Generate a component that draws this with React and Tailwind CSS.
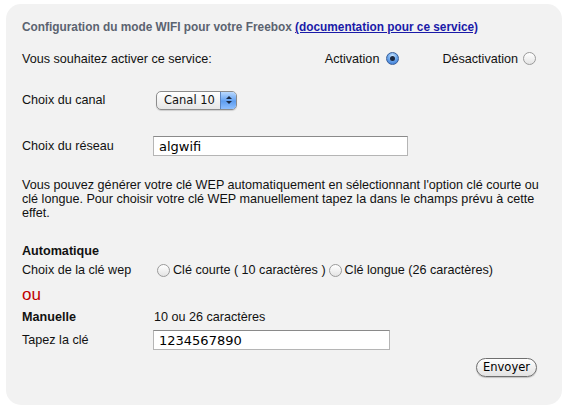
import React from 'react';

const Radio = ({ checked }) => (
    <span
        className={`inline-flex items-center justify-center w-[13px] h-[13px] rounded-full border shrink-0 ${
            checked
                ? 'border-[#3a5f99] bg-[radial-gradient(circle_at_50%_30%,#d6ecff_0%,#6fa9ec_45%,#2f6fd0_100%)]'
                : 'border-[#9a9a9a] bg-[linear-gradient(#ffffff,#e4e4e4)]'
        }`}
    >
        {checked && <span className="w-[5px] h-[5px] rounded-full bg-[#1a2740]"></span>}
    </span>
);

const Label = ({ children, bold }) => (
    <div className={`w-[133px] shrink-0 ${bold ? 'font-bold' : ''}`}>{children}</div>
);

const App = () => {
    return (
        <div className="w-[568px] h-[411px] bg-white pt-[4px] pl-[6px] text-[12.6px] text-[#111] font-['Liberation_Sans',Arial,sans-serif]">
            <div className="w-[556px] h-[401px] rounded-[15px] bg-[#f2f2f2] pt-[16px] pl-[16px] pr-[12px]">
                {/* Title */}
                <div className="h-[15px] leading-[15px] text-[11.85px] font-bold text-[#5b6370]">
                    Configuration du mode WIFI pour votre Freebox{' '}
                    <a href="#" className="text-[#1a1aa8] underline">(documentation pour ce service)</a>
                </div>

                {/* Activation */}
                <div className="mt-[14px] h-[20px] flex items-center">
                    <span className="flex-1">Vous souhaitez activer ce service:</span>
                    <span className="flex items-center gap-[7px] mr-[43px]">Activation <Radio checked /></span>
                    <span className="flex items-center gap-[5px] mr-[14px]">Désactivation <Radio /></span>
                </div>

                {/* Canal */}
                <div className="mt-[21px] h-[20px] flex items-center">
                    <Label>Choix du canal</Label>
                    <div className="ml-[1px] flex h-[19px] w-[81px] rounded-[5px] border border-[#8c8c8c] overflow-hidden bg-[linear-gradient(#ffffff,#e6e6e6)] shadow-[0_1px_1px_rgba(0,0,0,0.15)]">
                        <span className="flex-1 pl-[7px] leading-[17px] font-['DejaVu_Sans',sans-serif] text-[11.5px]">Canal 10</span>
                        <span className="w-[16px] border-l border-[#5d85c0] bg-[linear-gradient(#b9d9ff,#5f9ef0_55%,#8fc0ff)] flex flex-col items-center justify-center gap-[2px]">
                            <span className="w-0 h-0 border-l-[3px] border-r-[3px] border-b-[3px] border-l-transparent border-r-transparent border-b-[#1a2a44]"></span>
                            <span className="w-0 h-0 border-l-[3px] border-r-[3px] border-t-[3px] border-l-transparent border-r-transparent border-t-[#1a2a44]"></span>
                        </span>
                    </div>
                </div>

                {/* Réseau */}
                <div className="mt-[26px] h-[20px] flex items-center">
                    <Label>Choix du réseau</Label>
                    <input
                        readOnly
                        value="algwifi"
                        className="-ml-[2px] w-[255px] h-[20px] bg-white border border-[#b5b5b5] border-t-[#8a8a8a] px-[5px] text-[13px] font-['DejaVu_Sans',sans-serif] text-black outline-none"
                    />
                </div>

                {/* Paragraph */}
                <p className="mt-[22px] w-[528px] leading-[14px]">
                    Vous pouvez générer votre clé WEP automatiquement en sélectionnant l'option clé courte ou clé longue. Pour choisir votre clé WEP manuellement tapez la dans le champs prévu à cette effet.
                </p>

                {/* Automatique */}
                <div className="mt-[24px] h-[15px] leading-[15px] font-bold">Automatique</div>
                <div className="mt-[3px] h-[16px] flex items-center">
                    <Label>Choix de la clé wep</Label>
                    <span className="ml-[2px] flex items-center gap-[3px]"><Radio /> Clé courte ( 10 caractères )</span>
                    <span className="ml-[3px] flex items-center gap-[3px]"><Radio /> Clé longue (26 caractères)</span>
                </div>

                {/* ou */}
                <div className="mt-[8px] h-[18px] leading-[18px] text-[17px] text-[#c00000]">ou</div>

                {/* Manuelle */}
                <div className="mt-[6px] h-[15px] leading-[15px] flex">
                    <Label bold>Manuelle</Label>
                    <span className="-ml-[1px]">10 ou 26 caractères</span>
                </div>

                <div className="mt-[5px] h-[20px] flex items-center">
                    <Label>Tapez la clé</Label>
                    <input
                        readOnly
                        value="1234567890"
                        className="-ml-[2px] w-[237px] h-[20px] bg-white border border-[#b5b5b5] border-t-[#8a8a8a] px-[5px] text-[13px] font-['DejaVu_Sans',sans-serif] text-black outline-none"
                    />
                </div>

                <div className="mt-[8px] flex justify-end pr-[13px]">
                    <button className="h-[19px] px-[6px] rounded-full border border-[#6f6f6f] bg-[linear-gradient(#ffffff,#e2e2e2)] shadow-[0_1px_1px_rgba(0,0,0,0.2)] text-[11.5px] leading-[17px] font-['DejaVu_Sans',sans-serif] text-black">
                        Envoyer
                    </button>
                </div>
            </div>
        </div>
    );
};

export default App;
